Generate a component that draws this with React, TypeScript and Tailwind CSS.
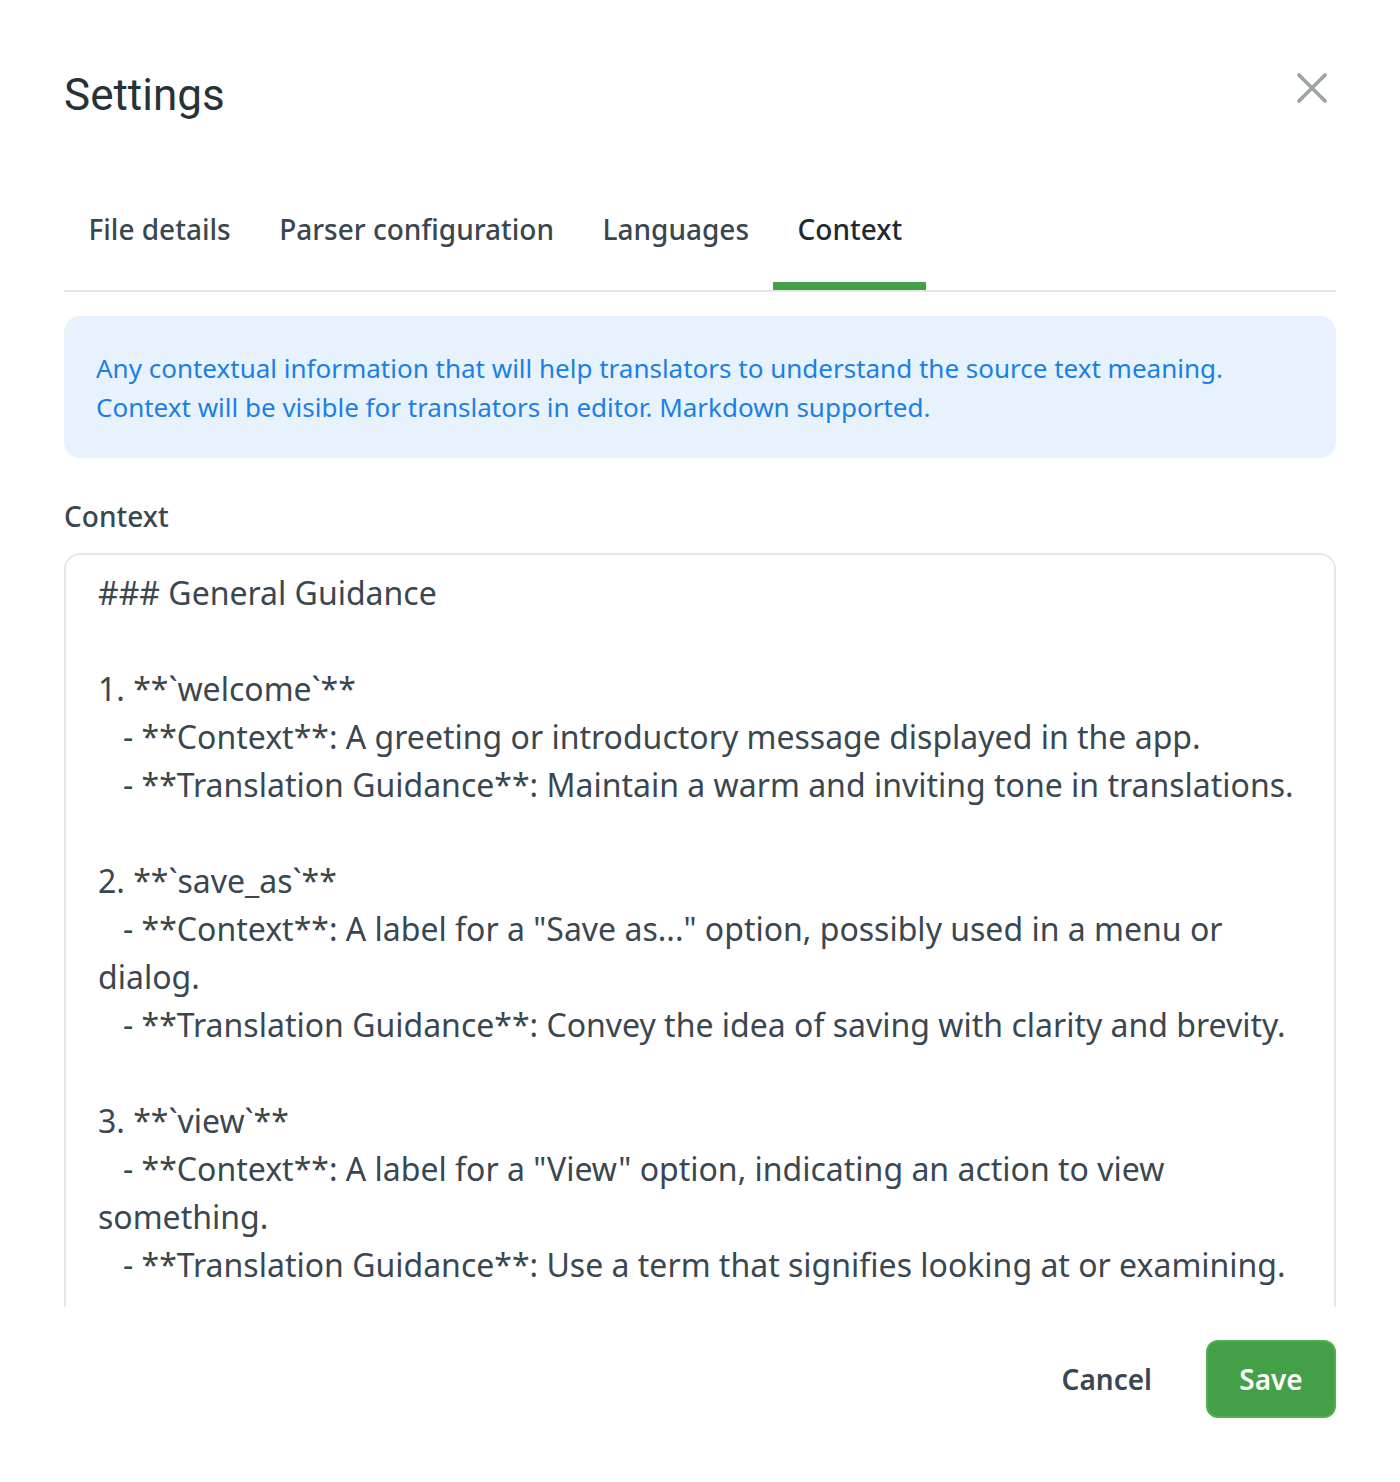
import React from "react";

const content = `### General Guidance

1. **\`welcome\`**
   - **Context**: A greeting or introductory message displayed in the app.
   - **Translation Guidance**: Maintain a warm and inviting tone in translations.

2. **\`save_as\`**
   - **Context**: A label for a "Save as..." option, possibly used in a menu or dialog.
   - **Translation Guidance**: Convey the idea of saving with clarity and brevity.

3. **\`view\`**
   - **Context**: A label for a "View" option, indicating an action to view something.
   - **Translation Guidance**: Use a term that signifies looking at or examining.

4. **\`edit\`**
   - **Context**: A label for an "Edit" option.`;

const tabs = ["File details", "Parser configuration", "Languages", "Context"];

export default function App() {
  return (
    <div
      className="w-[1400px] h-[1482px] bg-white px-[64px] flex flex-col overflow-hidden"
      style={{ fontFamily: '"Noto Sans", sans-serif' }}
    >
      <div className="flex justify-between items-start pt-[66px]">
        <h1
          className="text-[44px] leading-[58px] text-[#263238] font-normal"
          style={{ fontFamily: 'Roboto, "Noto Sans", sans-serif' }}
        >
          Settings
        </h1>
        <button className="mt-[7px] mr-[9px] w-[30px] h-[30px] flex items-center justify-center">
          <svg width="30" height="30" viewBox="0 0 30 30">
            <path d="M2 2 L28 28 M28 2 L2 28" stroke="#9ea4a8" strokeWidth="3.8" strokeLinecap="round" />
          </svg>
        </button>
      </div>

      <div className="mt-[69px] flex border-b-2 border-[#e6e6e6]">
        {tabs.map((t) => {
          const active = t === "Context";
          return (
            <div
              key={t}
              className={
                active
                  ? "pl-[24.5px] pr-[24px] pt-[16px] pb-[33px] border-b-[8px] border-[#43a047] text-[28px] leading-[40px] font-medium text-[#1e2a32]"
                  : "pl-[24.5px] pr-[24px] pt-[16px] pb-[33px] border-b-[8px] border-transparent text-[28px] leading-[40px] font-medium text-[#3a4750]"
              }
            >
              {t}
            </div>
          );
        })}
      </div>

      <div className="flex-1 overflow-hidden flex flex-col">
        <div className="mt-[24px] rounded-[16px] bg-[#e8f2fd] px-[32px] pt-[33px] pb-[31px] text-[26px] leading-[39px] text-[#1a80e5]">
          <p>Any contextual information that will help translators to understand the source text meaning.</p>
          <p>Context will be visible for translators in editor. Markdown supported.</p>
        </div>

        <div className="mt-[38px] text-[28px] leading-[40px] font-medium text-[#3a4750]">Context</div>

        <div className="mt-[17px] border-2 border-[#e8e8e8] rounded-[16px] pl-[32px] pr-[32px] pt-[14px] pb-[32px] text-[32px] leading-[48px] text-[#3a4750] whitespace-pre-wrap">
          {content}
        </div>
      </div>

      <div className="flex justify-end items-center gap-[30px] pt-[33px] pb-[64px]">
        <button className="px-[24px] h-[78px] text-[28px] font-semibold text-[#3a4750]">Cancel</button>
        <button className="w-[130px] h-[78px] rounded-[12px] bg-[#43a047] border-2 border-[#4caf50] text-white text-[28px] font-semibold">
          Save
        </button>
      </div>
    </div>
  );
}
